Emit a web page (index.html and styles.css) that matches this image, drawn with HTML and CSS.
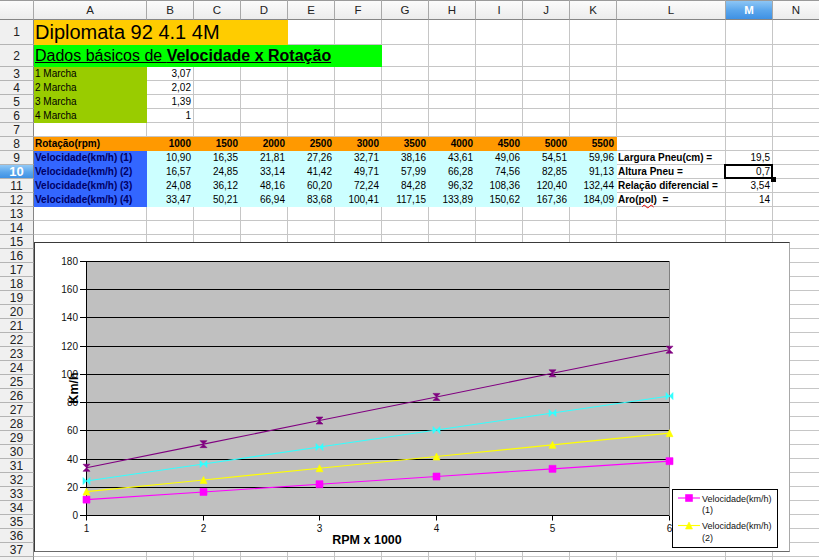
FILE: index.html
```html
<!DOCTYPE html>
<html lang="pt">
<head>
  <meta charset="UTF-8">
  <meta name="viewport" content="width=device-width, initial-scale=1.0">
  <title>Diplomata 92 4.1 4M</title>
  <link rel="stylesheet" href="styles.css">
</head>
<body>
  <div class="sheet">
    <div class="grid" id="grid"></div>

    <!-- Gráfico Velocidade x Rotação -->
    <div class="chart">
      <svg id="chart" width="754" height="308" viewBox="0 0 754 308"></svg>
    </div>
  </div>

  <script>
    const columns = ['A', 'B', 'C', 'D', 'E', 'F', 'G', 'H', 'I', 'J', 'K', 'L', 'M', 'N'];
    const rpm = [1000, 1500, 2000, 2500, 3000, 3500, 4000, 4500, 5000, 5500];
    const gears = [['1 Marcha', '3,07'], ['2 Marcha', '2,02'], ['3 Marcha', '1,39'], ['4 Marcha', '1']];
    const speeds = [
      ['10,90', '16,35', '21,81', '27,26', '32,71', '38,16', '43,61', '49,06', '54,51', '59,96'],
      ['16,57', '24,85', '33,14', '41,42', '49,71', '57,99', '66,28', '74,56', '82,85', '91,13'],
      ['24,08', '36,12', '48,16', '60,20', '72,24', '84,28', '96,32', '108,36', '120,40', '132,44'],
      ['33,47', '50,21', '66,94', '83,68', '100,41', '117,15', '133,89', '150,62', '167,36', '184,09']
    ];
    const params = [
      ['Largura Pneu(cm) =', '19,5'],
      ['Altura Pneu =', '0,7'],
      ['Relação diferencial =', '3,54'],
      ['Aro(<span class="typo">pol</span>)  =', '14']
    ];

    // Conteúdo das células
    const cells = {};
    cells.A1 = { html: 'Diplomata 92 4.1 4M', cls: 'title span-4' };
    cells.A2 = { html: '<u>Dados básicos de <b>Velocidade x Rotação</b></u>', cls: 'subtitle span-6' };
    gears.forEach((g, i) => {
      cells['A' + (i + 3)] = { html: g[0], cls: 'gear' };
      cells['B' + (i + 3)] = { html: g[1], cls: 'num' };
    });
    cells.A8 = { html: 'Rotação(rpm)', cls: 'rpm' };
    rpm.forEach((r, i) => {
      cells[columns[i + 1] + 8] = { html: r, cls: 'rpm num' };
    });
    speeds.forEach((row, r) => {
      cells['A' + (r + 9)] = { html: 'Velocidade(km/h) (' + (r + 1) + ')', cls: 'speed-label' };
      row.forEach((v, i) => {
        cells[columns[i + 1] + (r + 9)] = { html: v, cls: 'speed num' };
      });
      cells['L' + (r + 9)] = { html: params[r][0], cls: 'param' };
      cells['M' + (r + 9)] = { html: params[r][1], cls: 'num' };
    });
    cells.M10.cls += ' active';

    const grid = document.getElementById('grid');

    function addCell(cls, html) {
      const div = document.createElement('div');
      div.className = cls;
      if (html !== undefined) div.innerHTML = '<span>' + html + '</span>';
      grid.appendChild(div);
    }

    addCell('corner');
    columns.forEach(c => addCell('col-head' + (c === 'M' ? ' selected' : ''), c));

    // a linha 38 fica cortada pela borda da janela, sem número
    for (let r = 1; r <= 38; r++) {
      addCell('row-head' + (r === 10 ? ' selected' : ''), r < 38 ? r : undefined);
      for (let c = 0; c < columns.length; c++) {
        const cell = cells[columns[c] + r] || {};
        addCell('cell ' + (cell.cls || ''), cell.html);
        if (cell.cls && cell.cls.includes('span-4')) c += 3;
        if (cell.cls && cell.cls.includes('span-6')) c += 5;
      }
    }

    // Gráfico
    const NS = 'http://www.w3.org/2000/svg';
    const svg = document.getElementById('chart');
    const plot = { x: 51, y: 18, w: 583, h: 254 };
    const yMax = 180;
    const colors = ['#ff00ff', '#ffff00', '#33ffff', '#800080'];
    const shapes = ['square', 'triangle', 'bowtie', 'hourglass'];

    const px = i => Math.round(plot.x + i * plot.w / 5) + 0.5;
    const py = v => Math.round(plot.y + plot.h - v * plot.h / yMax) + 0.5;
    const vy = v => plot.y + plot.h - v * plot.h / yMax;

    function draw(tag, attrs, text) {
      const node = document.createElementNS(NS, tag);
      for (const k in attrs) node.setAttribute(k, attrs[k]);
      if (text !== undefined) node.textContent = text;
      svg.appendChild(node);
      return node;
    }

    function marker(shape, x, y, color) {
      const s = 3.5;
      let d = '';
      if (shape === 'square') d = `M${x - s},${y - s}h${2 * s}v${2 * s}h${-2 * s}z`;
      if (shape === 'triangle') d = `M${x},${y - s}L${x + s},${y + s}L${x - s},${y + s}z`;
      if (shape === 'bowtie') d = `M${x - s},${y - s}L${x},${y}L${x + s},${y - s}L${x + s},${y + s}L${x},${y}L${x - s},${y + s}z`;
      if (shape === 'hourglass') d = `M${x - s},${y - s}L${x + s},${y - s}L${x},${y}L${x + s},${y + s}L${x - s},${y + s}L${x},${y}z`;
      draw('path', { d: d, fill: color, stroke: color, 'stroke-width': 0.6 });
    }

    draw('rect', { x: plot.x, y: plot.y, width: plot.w, height: plot.h, fill: '#c0c0c0' });

    for (let v = 0; v <= yMax; v += 20) {
      draw('line', { x1: plot.x - 6, y1: py(v), x2: plot.x + plot.w, y2: py(v), stroke: '#000' });
      draw('text', { x: plot.x - 8, y: py(v) + 3.5, 'text-anchor': 'end', class: 'tick' }, v);
    }

    draw('line', { x1: px(5), y1: plot.y, x2: px(5), y2: plot.y + plot.h, stroke: '#808080' });
    draw('line', { x1: plot.x + 0.5, y1: plot.y, x2: plot.x + 0.5, y2: py(0), stroke: '#000' });

    for (let i = 0; i <= 5; i++) {
      draw('line', { x1: px(i), y1: py(0), x2: px(i), y2: py(0) + 5, stroke: '#000' });
      draw('text', { x: px(i), y: 289, 'text-anchor': 'middle', class: 'tick' }, i + 1);
    }

    draw('text', { x: 332, y: 300.5, 'text-anchor': 'middle', class: 'axis-title' }, 'RPM x 1000');
    draw('text', { transform: 'translate(43,145) rotate(-90)', 'text-anchor': 'middle', class: 'axis-title' }, 'Km/h');

    speeds.forEach((row, s) => {
      const values = row.slice(0, 6).map(v => parseFloat(v.replace(',', '.')));
      const points = values.map((v, i) => px(i) + ',' + vy(v)).join(' ');
      draw('polyline', { points: points, fill: 'none', stroke: colors[s], 'stroke-width': 1.1 });
      values.forEach((v, i) => marker(shapes[s], px(i), vy(v), colors[s]));
    });

    // Legenda
    draw('rect', { x: 637.5, y: 246.5, width: 105, height: 58, fill: '#fff', stroke: '#000' });
    [0, 1].forEach(s => {
      const top = 255 + s * 27.5;
      draw('line', { x1: 643, y1: top, x2: 665, y2: top, stroke: colors[s], 'stroke-width': 1.1 });
      marker(shapes[s], 654, top, colors[s]);
      draw('text', { x: 667, y: top + 3.5, class: 'legend' }, 'Velocidade(km/h)');
      draw('text', { x: 667, y: top + 15, class: 'legend' }, '(' + (s + 1) + ')');
    });
  </script>
</body>
</html>
```

FILE: styles.css
```css
body {
  margin: 0;
  background-color: #fff;
  color: #000;
  font-family: "Liberation Sans", Arial, sans-serif;
  overflow: hidden;
}

.sheet {
  position: relative;
  width: 819px;
  height: 560px;
  overflow: hidden;
}

.grid {
  display: grid;
  grid-template-columns: 34px 113px repeat(10, 47px) 109px 47px 47px;
  grid-template-rows: 20px 25px 22px repeat(36, 14px);
}

/* Cabeçalhos */
.corner,
.col-head {
  box-sizing: border-box;
  background: linear-gradient(#fcfcfc, #ececec);
  border-right: 1px solid #a8a8a8;
  border-bottom: 1px solid #858585;
  box-shadow: inset 0 1px #9a9a9a;
}

.col-head {
  display: flex;
  align-items: center;
  justify-content: center;
  font-size: 11.5px;
  color: #222;
}

.row-head {
  box-sizing: border-box;
  display: flex;
  align-items: center;
  justify-content: center;
  background-color: #f0f0f0;
  border-right: 1px solid #858585;
  border-bottom: 1px solid #b4b4b4;
  font-size: 12px;
  color: #222;
}

.col-head.selected,
.row-head.selected {
  background: linear-gradient(#92c9f6, #5aa6ec 55%, #3f91e4);
  color: #fff;
  font-weight: bold;
}

.row-head.selected {
  font-size: 13px;
}

/* Células */
.cell {
  box-sizing: border-box;
  display: flex;
  align-items: center;
  min-width: 0;
  padding: 0 2px 0 1px;
  border-right: 1px solid #c6c6c6;
  border-bottom: 1px solid #c6c6c6;
  font-size: 10px;
  white-space: pre;
}

.num {
  justify-content: flex-end;
}

.span-4 {
  grid-column: span 4;
}

.span-6 {
  grid-column: span 6;
}

.title {
  background-color: #ffcc00;
  border-color: transparent;
  font-size: 20px;
}

.subtitle {
  background-color: #00ff00;
  border-color: transparent;
  font-size: 16px;
}

.gear {
  background-color: #99cc00;
  border-color: transparent;
}

.rpm {
  background-color: #ff9900;
  border-color: transparent;
  font-weight: bold;
}

.speed-label {
  background-color: #3366ff;
  border-color: transparent;
  color: #000066;
  font-weight: bold;
}

.speed {
  background-color: #ccffff;
  border-color: transparent;
}

.param {
  font-weight: bold;
}

.typo {
  text-decoration: underline wavy #e00000;
  text-decoration-thickness: 1px;
}

.active {
  position: relative;
}

.active::before {
  content: "";
  position: absolute;
  top: -1px;
  right: -1px;
  bottom: -1px;
  left: -2px;
  border: 2px solid #000;
}

.active::after {
  content: "";
  position: absolute;
  right: -4px;
  bottom: -4px;
  width: 5px;
  height: 5px;
  background-color: #000;
}

/* Gráfico */
.chart {
  position: absolute;
  left: 34px;
  top: 242px;
  width: 756px;
  height: 310px;
  box-sizing: border-box;
  background-color: #fff;
  border: 1px solid #3a3a3a;
  border-right-color: #a8a8a8;
  border-bottom-color: #6a6a6a;
}

.chart svg {
  display: block;
  font-family: "Liberation Sans", Arial, sans-serif;
}

.tick {
  font-size: 10px;
  fill: #111;
}

.axis-title {
  font-size: 12.5px;
  font-weight: bold;
}

.legend {
  font-size: 9px;
  fill: #111;
}
```
